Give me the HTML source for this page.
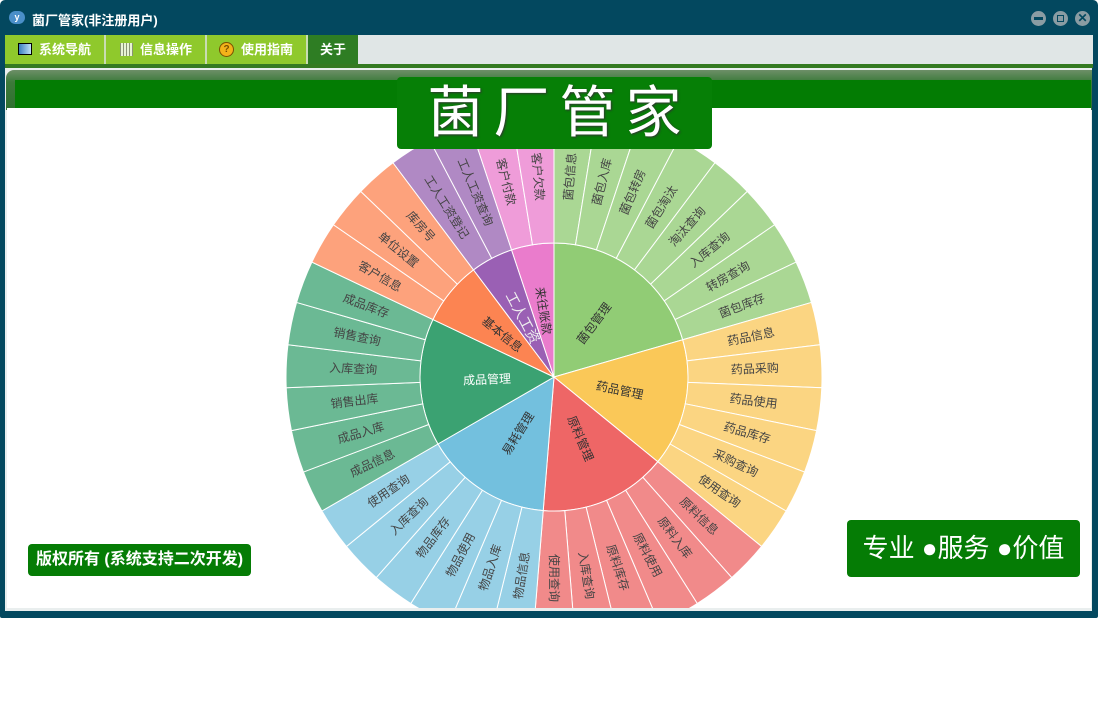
<!DOCTYPE html>
<html><head><meta charset="utf-8">
<style>
*{margin:0;padding:0;box-sizing:border-box}
body{width:1099px;height:723px;background:#fff;position:relative;overflow:hidden;font-family:"Liberation Sans","Noto Sans CJK SC",sans-serif}
.win{position:absolute;left:0;top:0;width:1098px;height:618px;background:#03485f;border-radius:5px 5px 2px 2px}
.title{position:absolute;left:32px;top:10px;color:#fff;font-weight:bold;font-size:13px}
.ico{position:absolute;left:9px;top:11px;width:16px;height:13px;border-radius:7px;background:#4a8fc8;color:#fff;font-size:9px;font-weight:bold;line-height:13px;text-align:center}
.btn{position:absolute;top:11px;width:15px;height:15px;border-radius:50%;background:#8a9ca3}
.toolbar{position:absolute;left:5px;top:35px;width:1088px;height:30px;background:#e0e6e6}
.tab{position:absolute;top:0;height:29px;background:#8fc92c;color:#fff;font-weight:bold;font-size:13px;line-height:30px}
.sep{position:absolute;top:0;width:2px;height:29px;background:#c9dcb4}
.gline{position:absolute;left:5px;top:64px;width:1088px;height:4px;background:#347a21}
.content{position:absolute;left:5px;top:68px;width:1087px;height:543px;background:#e9eeee}
.hdr{position:absolute;left:1px;top:2px;width:1086px;height:40px;border-radius:8px 0 0 0;background:linear-gradient(#6d8f68,#3c7a3a 30%,#2f6f2f)}
.gbar{position:absolute;left:10px;top:12px;width:1076px;height:28px;background:#037c03}
.white{position:absolute;left:2px;top:40px;width:1084px;height:500px;background:#fff;overflow:hidden}
.banner{position:absolute;left:397px;top:77px;width:315px;height:72px;background:#067f06;border-radius:4px;color:#fff;font-size:56px;line-height:72px;text-align:center;letter-spacing:10px;text-indent:10px;text-shadow:1px 1px 2px #333}
.copy{position:absolute;left:28px;top:544px;width:223px;height:32px;background:#057c05;border-radius:4px;color:#fff;font-size:16px;line-height:32px;text-align:center;font-weight:bold}
.slogan{position:absolute;left:847px;top:520px;width:233px;height:57px;background:#057c05;border-radius:4px;color:#fff;font-size:26px;line-height:57px;text-align:center}
</style></head><body>
<div class="win">
 <div class="ico">y</div>
 <div class="title">菌厂管家(非注册用户)</div>
 <div class="btn" style="left:1031px"><div style="position:absolute;left:3px;top:6px;width:9px;height:3px;background:#03485f"></div></div>
 <div class="btn" style="left:1053px"><div style="position:absolute;left:4px;top:4px;width:7px;height:7px;border:1.5px solid #03485f"></div></div>
 <div class="btn" style="left:1075px;color:#03485f;font-size:12px;line-height:15px;text-align:center;font-weight:bold">✕</div>
</div>
<div class="toolbar">
 <div class="tab" style="left:0;width:99px"><span style="position:absolute;left:13px;top:8px;width:14px;height:12px;border:1px solid #000;background:linear-gradient(90deg,#3a7fc0,#bfe0f8)"></span><span style="position:absolute;left:34px">系统导航</span></div>
 <div class="sep" style="left:99px"></div>
 <div class="tab" style="left:101px;width:99px"><span style="position:absolute;left:14px;top:8px;width:13px;height:13px;background:repeating-linear-gradient(90deg,#888 0 1px,#fff 1px 3px),#fff;opacity:.8"></span><span style="position:absolute;left:34px">信息操作</span></div>
 <div class="sep" style="left:200px"></div>
 <div class="tab" style="left:202px;width:99px"><span style="position:absolute;left:12px;top:7px;width:15px;height:15px;border-radius:50%;background:#f3b21a;border:1px solid #7a5000;color:#7a5000;font-size:10px;line-height:13px;text-align:center">?</span><span style="position:absolute;left:34px">使用指南</span></div>
 <div class="sep" style="left:301px"></div>
 <div class="tab" style="left:303px;width:50px;background:#2e7d23;text-align:center">关于</div>
</div>
<div class="gline"></div>
<div class="content">
 <div class="hdr"></div>
 <div class="gbar"></div>
 <div class="white"><svg id="sb" width="1084" height="500" style="position:absolute;left:0;top:0"></svg></div>
</div>
<div class="banner">菌厂管家</div>
<div class="copy">版权所有 (系统支持二次开发)</div>
<div class="slogan">专业 ●服务 ●价值</div>
<script>
var groups=[
["菌包管理","#91cc75","#aad794","#333",["菌包信息","菌包入库","菌包转房","菌包淘汰","淘汰查询","入库查询","转房查询","菌包库存"]],
["药品管理","#fac858","#fbd582","#333",["药品信息","药品采购","药品使用","药品库存","采购查询","使用查询"]],
["原料管理","#ee6666","#f18a8a","#333",["原料信息","原料入库","原料使用","原料库存","入库查询","使用查询"]],
["易耗管理","#73c0de","#97d0e6","#333",["物品信息","物品入库","物品使用","物品库存","入库查询","使用查询"]],
["成品管理","#3ba272","#6bb994","#fff",["成品信息","成品入库","销售出库","入库查询","销售查询","成品库存"]],
["基本信息","#fc8452","#fda27c","#333",["客户信息","单位设置","库房号"]],
["工人工资","#9a60b4","#b089c4","#eee",["工人工资登记","工人工资查询"]],
["来往账款","#ea7ccc","#ef9cd9","#333",["客户付款","客户欠款"]]];
var cx=547,cy=269,r1=134,r2=268,step=360/39,ns="http://www.w3.org/2000/svg",svg=document.getElementById("sb");
function pt(r,a){a=a*Math.PI/180;return [cx+r*Math.sin(a),cy-r*Math.cos(a)];}
function arc(ri,ro,a0,a1){var p=[pt(ro,a0),pt(ro,a1),pt(ri,a1),pt(ri,a0)],l=(a1-a0)>180?1:0;
 var d="M"+p[0]+"A"+ro+","+ro+" 0 "+l+" 1 "+p[1]+"L"+p[2];
 if(ri>0)d+="A"+ri+","+ri+" 0 "+l+" 0 "+p[3];d+="Z";return d;}
function add(tag,at,txt){var e=document.createElementNS(ns,tag);for(var k in at)e.setAttribute(k,at[k]);if(txt)e.textContent=txt;svg.appendChild(e);return e;}
function lab(r,a,t,col,fs){var p=pt(r,a),rot=a<=180?a-90:a-270;
 add("text",{x:p[0],y:p[1],fill:col,"font-size":fs,"text-anchor":"middle","dominant-baseline":"central",transform:"rotate("+rot+" "+p[0]+" "+p[1]+")","font-family":"Liberation Sans,Noto Sans CJK SC,sans-serif"},t);}
var idx=0;
groups.forEach(function(g){var a0=idx*step,a1=(idx+g[4].length)*step;
 add("path",{d:arc(0,r1,a0,a1),fill:g[1],stroke:"#fff","stroke-width":1});
 g[4].forEach(function(n,i){var b0=(idx+i)*step,b1=b0+step;
  add("path",{d:arc(r1,r2,b0,b1),fill:g[2],stroke:"#fff","stroke-width":1});
  lab(201,(b0+b1)/2,n,"#444",12);});
 lab(67,(a0+a1)/2,g[0],g[3],g[0]=="工人工资"?14:12);
 idx+=g[4].length;});
</script>
</body></html>
